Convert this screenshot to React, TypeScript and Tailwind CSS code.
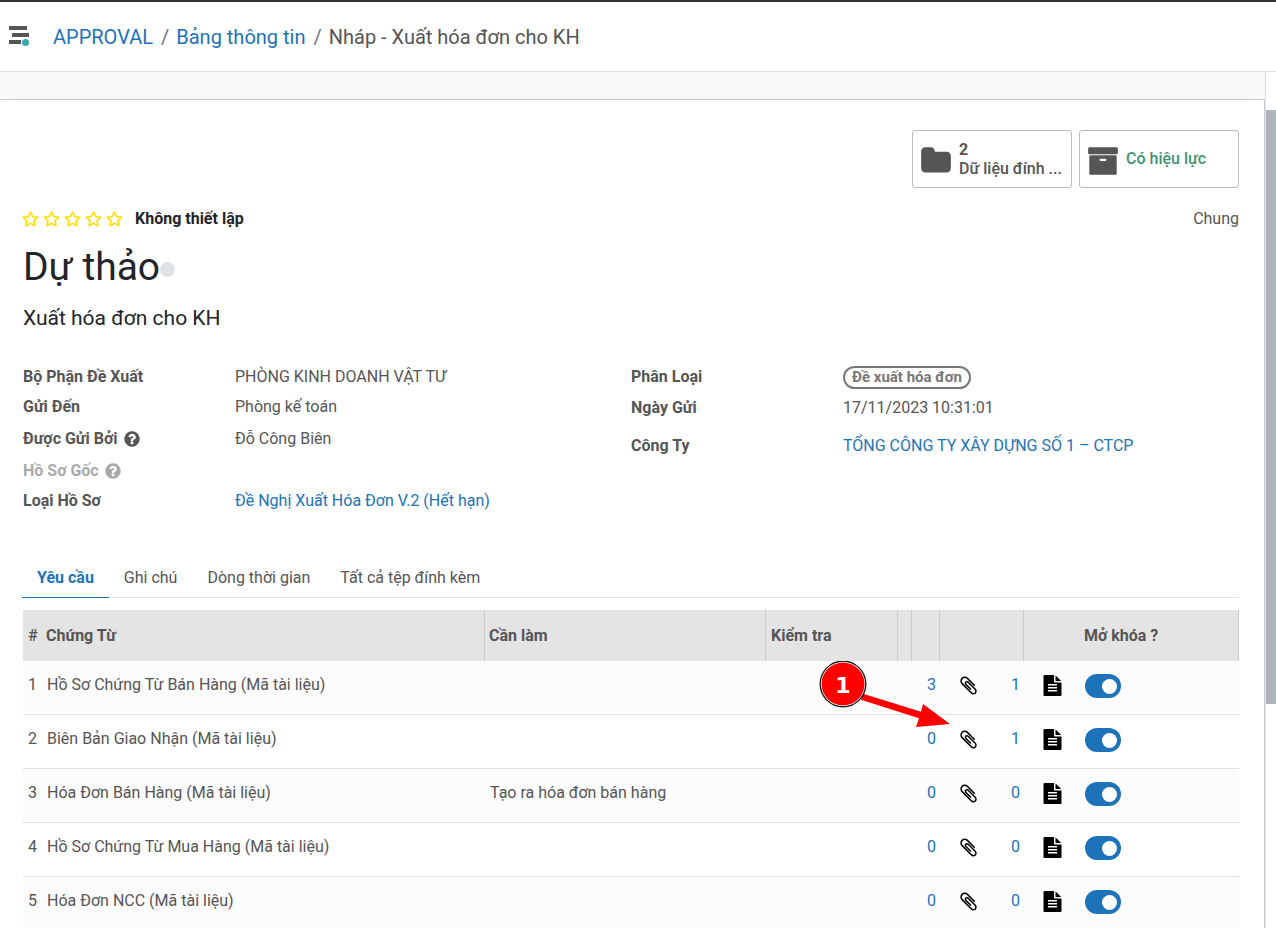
import type { ReactNode } from 'react';

const PATHS = {
  star: 'M1201 1004l306-297-422-62-189-382-189 382-422 62 306 297-73 421 378-199 377 199zm527-357q0 22-26 48l-363 354 86 500q1 7 1 20 0 50-41 50-19 0-40-12l-449-236-449 236q-22 12-40 12-21 0-31.5-14.5t-10.5-35.5q0-6 2-20l86-500-364-354q-25-27-25-48 0-37 56-46l502-73 225-455q19-41 49-41t49 41l225 455 502 73q56 9 56 46z',
  folder: 'M1728 608v704q0 92-66 158t-158 66h-1216q-92 0-158-66t-66-158v-960q0-92 66-158t158-66h320q92 0 158 66t66 158v32h672q92 0 158 66t66 158z',
  archive: 'M1088 832q0-26-19-45t-45-19h-256q-26 0-45 19t-19 45 19 45 45 19h256q26 0 45-19t19-45zm576-192v960q0 26-19 45t-45 19h-1408q-26 0-45-19t-19-45v-960q0-26 19-45t45-19h1408q26 0 45 19t19 45zm64-448v256q0 26-19 45t-45 19h-1536q-26 0-45-19t-19-45v-256q0-26 19-45t45-19h1536q26 0 45 19t19 45z',
  help: 'M1024 1376v-192q0-14-9-23t-23-9h-192q-14 0-23 9t-9 23v192q0 14 9 23t23 9h192q14 0 23-9t9-23zm256-672q0-88-55.5-163t-138.5-116-170-41q-243 0-371 213-15 24 8 42l132 100q7 6 19 6 16 0 25-12 53-68 86-92 34-24 86-24 48 0 85.5 26t37.5 59q0 38-20 61t-68 45q-63 28-115.5 86.5t-52.5 125.5v36q0 14 9 23t23 9h192q14 0 23-9t9-23q0-19 21.5-49.5t54.5-49.5q32-18 49-28.5t46-35 44.5-48 28-60.5 12.5-81zm384 192q0 209-103 385.5t-279.5 279.5-385.5 103-385.5-103-279.5-279.5-103-385.5 103-385.5 279.5-279.5 385.5-103 385.5 103 279.5 279.5 103 385.5z',
  file: 'M1596 476q14 14 28 36h-472v-472q22 14 36 28zm-476 164h544v1056q0 40-28 68t-68 28h-1344q-40 0-68-28t-28-68v-1600q0-40 28-68t68-28h800v544q0 40 28 68t68 28zm160 736v-64q0-14-9-23t-23-9h-704q-14 0-23 9t-9 23v64q0 14 9 23t23 9h704q14 0 23-9t9-23zm0-256v-64q0-14-9-23t-23-9h-704q-14 0-23 9t-9 23v64q0 14 9 23t23 9h704q14 0 23-9t9-23zm0-256v-64q0-14-9-23t-23-9h-704q-14 0-23 9t-9 23v64q0 14 9 23t23 9h704q14 0 23-9t9-23z',
  clip: 'M1596 1385q0 117-79 196t-196 79q-135 0-235-100l-777-776q-113-115-113-271 0-159 110-270t269-111q158 0 273 113l605 606q10 10 10 22 0 16-30.5 46.5t-46.5 30.5q-13 0-23-10l-606-607q-79-77-181-77-106 0-179 75t-73 181q0 105 76 181l776 777q63 63 145 63 64 0 106-42t42-106q0-82-63-145l-581-581q-26-24-60-24-29 0-48 19t-19 48q0 32 25 59l410 410q10 10 10 22 0 16-31 47t-47 31q-12 0-22-10l-410-410q-63-61-63-149 0-82 57-139t139-57q88 0 149 63l581 581q100 98 100 235z',
};

function Icon({ name, className }: { name: keyof typeof PATHS; className: string }) {
  return (
    <svg viewBox="0 0 1792 1792" fill="currentColor" aria-hidden="true" className={className}>
      <path d={PATHS[name]} />
    </svg>
  );
}

const ROWS = [
  { name: 'Hồ Sơ Chứng Từ Bán Hàng (Mã tài liệu)', todo: '', clips: 3, files: 1 },
  { name: 'Biên Bản Giao Nhận (Mã tài liệu)', todo: '', clips: 0, files: 1 },
  { name: 'Hóa Đơn Bán Hàng (Mã tài liệu)', todo: 'Tạo ra hóa đơn bán hàng', clips: 0, files: 0 },
  { name: 'Hồ Sơ Chứng Từ Mua Hàng (Mã tài liệu)', todo: '', clips: 0, files: 0 },
  { name: 'Hóa Đơn NCC (Mã tài liệu)', todo: '', clips: 0, files: 0 },
];

function Field({ label, help, muted, className, children }: {
  label: string;
  help?: boolean;
  muted?: boolean;
  className: string;
  children?: ReactNode;
}) {
  return (
    <div className={`flex items-center ${className}`}>
      <dt className={`flex w-[212px] shrink-0 items-center font-bold ${muted ? 'opacity-50' : ''}`}>
        {label}
        {help && <Icon name="help" className="ml-[5px] size-[18px]" />}
      </dt>
      <dd>{children}</dd>
    </div>
  );
}

function Callout() {
  return (
    <svg
      viewBox="0 0 134 76"
      className="pointer-events-none absolute top-0 right-[-52px] z-10 h-[76px] w-[134px]"
      role="img"
      aria-label="1"
    >
      <path d="M47 32.700 L105 50.800 L107 43 L134 63 L100 66 L103 57.300 L45 38.800z" fill="#f00" />
      <circle cx="27" cy="23" r="23.500" fill="#111" />
      <circle cx="27" cy="23" r="22.200" fill="#fff" />
      <circle cx="27" cy="23" r="21.500" fill="#f00" />
      <text x="27" y="32" textAnchor="middle" fontSize="22" fontWeight="700" fill="#fff" className="font-['DejaVu_Sans',sans-serif]">1</text>
    </svg>
  );
}

export default function App() {
  return (
    <div className="flex h-screen flex-col overflow-hidden border-t-2 border-[#353132] bg-white font-[Roboto,sans-serif] text-base text-[#555]">
      <header className="flex h-[70px] shrink-0 items-center border-b border-[#dee2e6] pl-2">
        <button type="button" aria-label="Menu" className="mr-6 pb-0.5">
          <svg viewBox="0 0 21 21" className="block size-[21px]">
            <path d="M1 1h18v4H1zM4 8h17v4H4zM1 15h12v4H1z" fill="#555" />
            <circle cx="17.500" cy="17.500" r="3.500" fill="#35aaaf" />
          </svg>
        </button>
        <nav aria-label="Breadcrumb" className="flex items-center gap-[7px] text-xl">
          <a href="#approval" className="mr-px text-[#1c73ba]">APPROVAL</a>
          <span className="text-gray-500">/</span>
          <a href="#dashboard" className="mr-px text-[#1c73ba]">Bảng thông tin</a>
          <span className="text-gray-500">/</span>
          <span>Nháp - Xuất hóa đơn cho KH</span>
        </nav>
      </header>
      <div className="flex min-h-0 flex-1">
        <main className="min-w-0 flex-1 overflow-hidden bg-[#f9f9f9] pt-[27px]">
          <div className="border-t border-r border-[#c9ccd2] bg-white pr-[25px] pl-[23px] shadow-[0_5px_20px_-15px_#000]">
            <div className="flex justify-end gap-[7px] pt-[30px]">
              <button type="button" className="flex h-[58px] w-[160px] items-center rounded-[3px] border border-[#bbb] pl-[7px] text-left font-medium">
                <Icon name="folder" className="mt-[3px] size-8 shrink-0" />
                <span className="ml-[7px] flex min-w-0 flex-col leading-[19px]">
                  <span className="font-bold">2</span>
                  <span>Dữ liệu đính ...</span>
                </span>
              </button>
              <button type="button" className="flex h-[58px] w-[160px] items-center rounded-[3px] border border-[#bbb] pl-[7px] font-medium text-[#3f9371]">
                <Icon name="archive" className="mt-[3px] size-8 shrink-0 text-[#555]" />
                <span className="ml-[7px]">Có hiệu lực</span>
              </button>
            </div>

            <div className="mt-[19px] flex h-6 items-center">
              <div className="-ml-px flex gap-1 text-[#fd0]">
                {[1, 2, 3, 4, 5].map((n) => (
                  <button key={n} type="button" aria-label={`${n} sao`}>
                    <Icon name="star" className="block size-[17px] stroke-current [stroke-width:50]" />
                  </button>
                ))}
              </div>
              <span className="ml-3 font-bold text-[#212529]">Không thiết lập</span>
              <span className="ml-auto">Chung</span>
            </div>
            <h1 className="mt-3 flex h-12 items-center text-[39px] leading-12 text-[#212529]">
              Dự thảo
              <span className="mt-1 size-[15px] rounded-full bg-[#dee2e6]" />
            </h1>
            <h2 className="mt-[11px] text-[21px] leading-8 text-[#212529]">Xuất hóa đơn cho KH</h2>

            <div className="mt-7 grid grid-cols-2">
              <dl>
                <Field label="Bộ Phận Đề Xuất" className="h-[30px]">PHÒNG KINH DOANH VẬT TƯ</Field>
                <Field label="Gửi Đến" className="h-[30px]">Phòng kế toán</Field>
                <Field label="Được Gửi Bởi" help className="h-[33px]">Đỗ Công Biên</Field>
                <Field label="Hồ Sơ Gốc" help muted className="h-[31px]" />
                <Field label="Loại Hồ Sơ" className="h-[30px]">
                  <a href="#type" className="text-[#1c73ba]">Đề Nghị Xuất Hóa Đơn V.2 (Hết hạn)</a>
                </Field>
              </dl>
              <dl>
                <Field label="Phân Loại" className="h-[30px]">
                  <span className="flex h-[23px] items-center rounded-full border-2 border-[#777] px-[7px] text-[15px] font-bold text-[#777]">
                    Đề xuất hóa đơn
                  </span>
                </Field>
                <Field label="Ngày Gửi" className="h-8">17/11/2023 10:31:01</Field>
                <Field label="Công Ty" className="mt-2 h-7">
                  <a href="#company" className="text-[#1c73ba]">TỔNG CÔNG TY XÂY DỰNG SỐ 1 – CTCP</a>
                </Field>
              </dl>
            </div>

            <div role="tablist" className="mt-[42px] -ml-px flex h-10 border-b border-[#dee2e6]">
              <button type="button" role="tab" aria-selected="true" className="-mb-px border-b border-[#1c73ba] px-[15px] font-bold text-[#1c73ba]">Yêu cầu</button>
              <button type="button" role="tab" aria-selected="false" className="px-[15px]">Ghi chú</button>
              <button type="button" role="tab" aria-selected="false" className="px-[15px]">Dòng thời gian</button>
              <button type="button" role="tab" aria-selected="false" className="px-[15px]">Tất cả tệp đính kèm</button>
            </div>

            <table className="mt-3 w-full table-fixed border-separate border-spacing-0 text-left">
              <colgroup>
                <col className="w-[23px]" />
                <col />
                <col className="w-[281px]" />
                <col className="w-[132px]" />
                <col className="w-[14px]" />
                <col className="w-[28px]" />
                <col className="w-[56px]" />
                <col className="w-[28px]" />
                <col className="w-[56px]" />
                <col className="w-[159px]" />
              </colgroup>
              <thead className="bg-[#e4e4e4]">
                <tr className="h-[51px]">
                  <th className="pl-[5px] font-medium">#</th>
                  <th className="border-r border-[#ccc]">Chứng Từ</th>
                  <th className="border-r border-[#ccc] pl-1">Cần làm</th>
                  <th className="border-r border-[#ccc] pl-[5px]">Kiểm tra</th>
                  <th className="border-r border-[#ccc]" />
                  <th className="border-r border-[#ccc]" />
                  <th className="border-r border-[#ccc]" colSpan={2} />
                  <th />
                  <th className="border-r border-[#ccc] pl-1">Mở khóa ?</th>
                </tr>
              </thead>
              <tbody>
                {ROWS.map((row, i) => (
                  <tr key={row.name} className="h-[54px] odd:bg-[#fcfcfc] [&>td]:border-b [&>td]:border-[#dee2e6]">
                    <td className="pb-[5px] pl-[5px]">{i + 1}</td>
                    <td className="pb-[5px] pl-px">{row.name}</td>
                    <td className="pb-[5px] pl-[5px]">{row.todo}</td>
                    <td className="relative">{i === 0 && <Callout />}</td>
                    <td />
                    <td className="pr-1 pb-[5px] text-right">
                      <a href="#attachments" className="text-[#1c73ba]">{row.clips}</a>
                    </td>
                    <td className="pb-[5px]">
                      <button type="button" aria-label="Đính kèm" className="mx-auto block text-black">
                        <Icon name="clip" className="block size-[21px]" />
                      </button>
                    </td>
                    <td className="pr-1 pb-[5px] text-right">
                      <a href="#files" className="text-[#1c73ba]">{row.files}</a>
                    </td>
                    <td className="pb-[5px]">
                      <button type="button" aria-label="Tài liệu" className="mx-auto block text-black">
                        <Icon name="file" className="block size-[21px]" />
                      </button>
                    </td>
                    <td className="pb-1 pl-[5px]">
                      <label className="relative block h-6 w-9">
                        <input
                          type="checkbox"
                          defaultChecked
                          aria-label={`Mở khóa ${row.name}`}
                          className="peer block h-6 w-9 appearance-none rounded-full bg-gray-400 checked:bg-[#1c73ba]"
                        />
                        <span className="pointer-events-none absolute top-[5px] left-1 size-[15px] rounded-full bg-white peer-checked:right-1 peer-checked:left-auto" />
                      </label>
                    </td>
                  </tr>
                ))}
              </tbody>
            </table>
          </div>
        </main>
        <div className="w-[11px] shrink-0 border-l border-[#dee2e6] pt-[38px]">
          <div className="h-[594px] bg-[#adb5bd]" />
        </div>
      </div>
    </div>
  );
}
